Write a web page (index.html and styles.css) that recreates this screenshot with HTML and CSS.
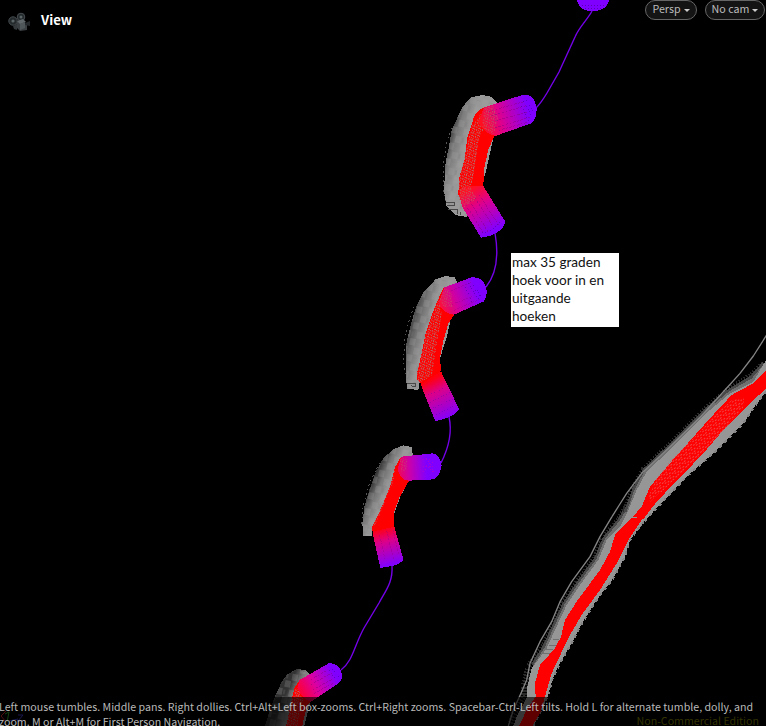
FILE: index.html
```html
<!DOCTYPE html>
<html lang="en">
<head>
<meta charset="utf-8">
<title>View</title>
<link rel="stylesheet" href="styles.css">
</head>
<body>
<main class="viewport">
<svg class="scene" viewBox="0 0 766 726" aria-hidden="true">
  <defs>
    <pattern id="mesh" width="18" height="21" patternUnits="userSpaceOnUse" patternTransform="skewX(-9)">
      <path class="grain" d="M0 0h3v6h-3zM6 3h3v3h-3zM12 0h3v3h-3zM3 9h3v3h-3zM9 9h3v6h-3zM15 12h3v3h-3zM0 15h3v3h-3zM6 18h6v3h-6zM12 6h3v3h-3z"/>
    </pattern>
    <pattern id="mesh2" width="21" height="15" patternUnits="userSpaceOnUse" patternTransform="rotate(-45)">
      <path class="grain2" d="M0 0h6v3h-6zM9 3h6v2h-6zM15 9h5v3h-5zM3 9h6v2h-6z"/>
    </pattern>
    <pattern id="blocks" width="37" height="49" patternUnits="userSpaceOnUse" patternTransform="rotate(12)">
      <path class="block-light" d="M0 0h18v20h-18zM20 24h17v19h-17z"/>
      <path class="block-dark" d="M20 3h7v14h-7zM2 28h12v4h-12z"/>
    </pattern>
    <linearGradient id="shade1" gradientUnits="userSpaceOnUse" x1="48" y1="200" x2="100" y2="215"><stop offset="0" stop-color="#3a3a3a"/><stop offset=".4" stop-color="#7c7c7c"/><stop offset="1" stop-color="#989898"/></linearGradient>
    <linearGradient id="shade2" gradientUnits="userSpaceOnUse" x1="38" y1="220" x2="90" y2="235"><stop offset="0" stop-color="#444"/><stop offset=".5" stop-color="#777"/><stop offset="1" stop-color="#959595"/></linearGradient>
    <linearGradient id="shade3" gradientUnits="userSpaceOnUse" x1="60" y1="170" x2="105" y2="190"><stop offset="0" stop-color="#333"/><stop offset=".5" stop-color="#777"/><stop offset="1" stop-color="#959595"/></linearGradient>
    <linearGradient id="t1" gradientUnits="userSpaceOnUse" x1="155" y1="130" x2="295" y2="88"><stop offset="0" stop-color="#ff1020"/><stop offset=".4" stop-color="#dc0090"/><stop offset="1" stop-color="#8000ff"/></linearGradient>
    <linearGradient id="b1" gradientUnits="userSpaceOnUse" x1="120" y1="325" x2="195" y2="450"><stop offset="0" stop-color="#ff1020"/><stop offset=".4" stop-color="#dc0090"/><stop offset="1" stop-color="#8000ff"/></linearGradient>
    <linearGradient id="t2" gradientUnits="userSpaceOnUse" x1="135" y1="130" x2="245" y2="90"><stop offset="0" stop-color="#fa1040"/><stop offset=".4" stop-color="#d000a0"/><stop offset="1" stop-color="#8000ff"/></linearGradient>
    <linearGradient id="b2" gradientUnits="userSpaceOnUse" x1="105" y1="360" x2="165" y2="475"><stop offset="0" stop-color="#ff0010"/><stop offset=".3" stop-color="#dc0088"/><stop offset="1" stop-color="#8000ff"/></linearGradient>
    <linearGradient id="t3" gradientUnits="userSpaceOnUse" x1="135" y1="115" x2="230" y2="110"><stop offset="0" stop-color="#fa0840"/><stop offset=".45" stop-color="#cc00a8"/><stop offset="1" stop-color="#8000ff"/></linearGradient>
    <linearGradient id="b3" gradientUnits="userSpaceOnUse" x1="95" y1="295" x2="125" y2="405"><stop offset="0" stop-color="#ff0010"/><stop offset=".35" stop-color="#dc0088"/><stop offset="1" stop-color="#8000ff"/></linearGradient>
    <linearGradient id="t4" gradientUnits="userSpaceOnUse" x1="115" y1="125" x2="220" y2="65"><stop offset="0" stop-color="#ff0030"/><stop offset=".45" stop-color="#dc00a0"/><stop offset="1" stop-color="#8000ff"/></linearGradient>
  </defs>

  <g class="thread">
    <path d="M592 11C588 19 579 27 575 37L559 72L547 93Q541 103 536 108"/>
    <path d="M495 233C498 250 498 272 486 287"/>
    <path d="M449 417C452 430 450 445 441 463"/>
    <path d="M392 566C393 582 386 590 379 603L364 628C354 646 353 661 341 670"/>
  </g>
  <path class="violet" d="M577 0H609Q608 7 602 9Q592 14 583 9Q578 6 577 0Z"/>
  <path class="pits" d="M582 5h25M585 8h18"/>

  <g transform="translate(430 80) scale(.33333)">
    <path class="ghost" d="M65 145L49 190L42 240L40 325L48 370"/>
    <path fill="url(#shade1)" d="M202 68L183 50L155 45L122 53L98 80L78 122L65 150L57 200L47 245L42 330L49 378L75 405L110 411V375L155 310L166 283L192 165Z"/>
    <path fill="url(#blocks)" d="M202 68L155 45L122 53L98 80L65 150L57 200L47 245L42 330L49 378L75 405L110 411V375L192 165Z"/>
    <path class="mark" d="M48 367h27v9h-24M54 389h29v12M91 397v9"/>
    <path class="red" d="M162 82Q132 93 125 135L112 172L104 238L87 295L85 345L100 375L160 320L162 268L176 205L195 166Z"/>
    <path fill="url(#mesh)" d="M160 90L125 140L108 210L86 310V350L125 310L134 270L147 175L160 150Z"/>
    <path fill="url(#t1)" d="M162 82L280 44Q310 40 319 78Q323 116 304 130L196 168Q160 160 145 125Z"/>
    <path class="rib" d="M175 94L282 65M183 108L288 77M185 126L292 96M195 143L300 112M206 151L292 127"/>
    <path fill="url(#mesh)" opacity=".65" d="M162 84L190 75L205 115L190 163L155 140Z"/>
    <path class="specks" d="M280 63L305 108M290 60L312 98M275 79L297 125"/>
    <path fill="url(#b1)" d="M88 348Q92 315 118 317L160 318L224 422Q226 438 212 449Q188 470 153 473L98 383Z"/>
    <path fill="url(#mesh)" opacity=".7" d="M87 325L120 318L140 355L105 382L88 358Z"/>
    <path class="rib" d="M119 362L174 456M135 354L191 442M148 345L205 434M108 374L160 459"/>
    <path class="specks" d="M155 458Q184 458 212 423"/>
  </g>

  <g transform="translate(395 260) scale(.33333)">
    <path class="ghost" d="M56 140L38 195L28 240L26 310L36 365"/>
    <path fill="url(#shade2)" d="M187 68L180 52L152 48L123 57L86 95L64 138L47 195L34 250L32 340L36 386L70 390L75 360L137 289L155 232L170 165Z"/>
    <path fill="url(#blocks)" d="M187 68L152 48L123 57L86 95L64 138L47 195L34 250L36 386L70 390L75 360L137 289Z"/>
    <path class="mark" d="M37 372h25v7h-12v-3"/>
    <path class="red" d="M145 84L131 115L112 160L92 220L80 280L66 340V360L80 374L137 334L136 287L145 242L160 190L177 165Z"/>
    <path fill="url(#mesh)" d="M132 112L94 220L66 342L72 370L112 345L125 252L141 160Z"/>
    <path fill="url(#t2)" d="M148 82L230 52Q262 50 272 78Q280 101 267 124L177 164Q145 160 130 130Z"/>
    <path fill="url(#mesh)" opacity=".5" d="M147 84L169 95L173 140L148 141L134 120Z"/>
    <path class="specks" d="M219 70L250 116M230 68L258 108M211 82L231 127M237 83L259 116"/>
    <path class="rib faint" d="M168 92L232 66M170 133L234 109M177 151L254 118"/>
    <path fill="url(#b2)" d="M77 373L138 334L193 449Q181 463 157 474L121 484Z"/>
    <path class="specks faint" d="M105 428l70-36M113 445l70-32M124 465l55-28M100 405l48-21"/>
  </g>

  <g transform="translate(350 430) scale(.33333)">
    <path class="ghost" d="M90 98L59 158L40 225L34 287"/>
    <path fill="url(#shade3)" d="M188 73L186 51L160 46L129 58L99 86L78 124L58 180L43 230L37 282L40 318H65L66 303L133 250L150 202L177 152Z"/>
    <path fill="url(#blocks)" d="M188 73L160 46L129 58L99 86L78 124L43 230L37 282L40 318H65L133 250Z"/>
    <path class="red" d="M152 82L135 112L120 170L98 225L66 292L68 306L132 294V246L148 203L177 152Z"/>
    <path fill="url(#mesh)" opacity=".75" d="M136 112L119 170L92 237L67 290L80 280L105 215L130 155Z"/>
    <path fill="url(#t3)" d="M154 80L249 70Q268 75 275 105Q270 138 252 148L177 152Q148 150 143 116Z"/>
    <path fill="url(#mesh)" opacity=".45" d="M151 83L171 88L170 120L153 126Z"/>
    <path class="specks hot" d="M220 88h25M222 98l28 30M221 125l30-30M230 84l22 45M218 110h36"/>
    <path fill="url(#b3)" d="M67 305L133 290L160 388Q158 398 128 408L91 414Z"/>
    <path class="rib faint" d="M89 316l17 76M110 303l22 90M129 300l18 77"/>
  </g>

  <g transform="translate(260 650) scale(.33333)">
    <path fill="url(#shade3)" d="M150 72L137 60L110 57L82 73L65 96L44 142L28 185L14 230H132L150 160Z"/>
    <path fill="url(#blocks)" d="M150 72L110 57L82 73L65 96L44 142L14 230H82L150 160Z"/>
    <path class="red" d="M119 89L104 113L95 150L78 230H126L142 165L151 157Z"/>
    <path fill="url(#mesh)" d="M108 108L96 150L79 228H112L130 146Z"/>
    <path fill="url(#t4)" d="M119 90L208 39Q234 40 244 65Q250 87 238 98L151 156Q119 140 112 112Z"/>
    <path class="rib" d="M153 88L201 61M152 104L215 69M158 120L219 86M163 130L219 100"/>
    <path class="specks" d="M202 53L228 89M211 50L235 80"/>
  </g>

  <g class="falloff" transform="translate(500 520) scale(.33333)">
    <path class="f1" d="M392 -40L365 5L320 60L295 120L240 195L200 255L165 330L140 385L95 445L82 500V530L50 590L40 618"/>
    <path class="f2" d="M392 -40L365 5L320 60L295 120L240 195L200 255L165 330L140 385L105 440"/>
    <path class="f3" d="M392 -40L365 5L320 60L295 120L240 195L200 255L165 330L140 385L105 440"/>
  </g>
  <g transform="translate(620 330) scale(.33333)">
    <g class="falloff">
      <path class="f1" d="M438 110L400 145L330 190L270 240L170 340L80 425L50 480L25 550"/>
      <path class="f2" d="M438 105L400 148L330 190L270 240L170 340L80 425L50 480L25 550"/>
      <path class="f3" d="M438 105L400 150L330 190L270 240L170 340L80 425L50 480L25 550"/>
    </g>
    <path class="outline" d="M440 15L400 78L360 130L315 180L240 262L150 350L65 430L20 490L-4 528L-24 560"/>
    <path class="lightgray" d="M438 90L400 155L330 190L270 240L170 340L80 425L50 480L25 540L0 590L45 605L100 545L200 440L280 370L370 280L400 235L438 185Z"/>
    <path class="edge" d="M438 185L400 235L370 280L280 370L200 440L100 545L50 600"/>
    <path class="red" d="M438 122L400 160L335 195L270 265L150 400L90 470L65 530L0 605H42L110 515L250 370L310 300L375 235L438 175Z"/>
    <path fill="url(#mesh2)" d="M335 209L280 262L211 335L152 392L110 444L85 500L90 519L122 487L187 427L252 365L309 302L369 236L372 205Z"/>
  </g>
  <g transform="translate(500 520) scale(.33333)">
    <path class="outline" d="M336 -10L300 50L270 110L215 185L180 245L155 305L120 365L90 430L80 480L65 515L40 570L25 618"/>
    <path class="lightgray" d="M385 -15L365 15L320 60L295 120L240 195L200 255L165 330L140 385L95 445L82 500V530L50 590L40 618H100L125 570L145 525L158 475L185 420L215 370L240 320L290 240L340 175L375 110L390 60L435 0Z"/>
    <path class="dashes" d="M132 390h28M127 400h24M147 378h26M160 358h18"/>
    <path class="edge" d="M100 618L125 570L145 525L158 475L185 420L215 370L240 320L290 240L340 175L375 110L390 60L435 0"/>
    <path class="red" d="M395 -5L345 45L330 95L300 150L230 245L195 300L183 350L165 385L120 435L105 490L107 530L80 570L57 618H97L120 580L135 530L155 460L195 375L210 345L245 285L300 210L350 130L385 60L428 -5Z"/>
  </g>
</svg>

<header class="toolbar">
  <div class="title">
    <svg class="camera" viewBox="0 0 23 20" aria-hidden="true">
      <path d="M9 9L19 12V18L12 19L8 15Z" fill="#3a3f42"/>
      <circle cx="5" cy="9" r="4.2" fill="#24292b" stroke="#454c4f"/>
      <circle cx="13" cy="5" r="3.8" fill="#24292b" stroke="#454c4f"/>
      <circle cx="5" cy="9" r="1.6" fill="#5b6467"/><circle cx="13" cy="5" r="1.5" fill="#5b6467"/>
      <path d="M9 9L15 7L18 10L12 12Z" fill="#60686c"/><path d="M12 12L17 10V16L12 18Z" fill="#50575b"/>
      <path d="M17 11L22 9V14L17 13Z" fill="#24282b"/><path d="M5 14L9 12V18L6 17Z" fill="#34393b"/>
    </svg>
    <span class="title-text">View</span>
  </div>
  <nav class="menus">
    <button class="pill persp"><span>Persp</span><i class="caret"></i></button>
    <button class="pill cam"><span>No cam</span><i class="caret"></i></button>
  </nav>
</header>

<aside class="note">max 35 graden<br>hoek voor in en<br>uitgaande<br>hoeken</aside>

<footer class="status">
  <svg class="axis" viewBox="0 0 28 20" aria-hidden="true"><path d="M6 2L1 7L6 13" stroke="#501010"/><path d="M5 5L9 3L7 13" stroke="#104010"/><path d="M9 12L18 10M18 6H23L18 12H23" stroke="#171750"/></svg>
  <p class="help"><span class="line">Left mouse tumbles. Middle pans. Right dollies. Ctrl+Alt+Left box-zooms. Ctrl+Right zooms. Spacebar-Ctrl-Left tilts. Hold L for alternate tumble, dolly, and</span><span class="line">zoom. M or Alt+M for First Person Navigation.</span></p>
  <span class="edition">Non-Commercial Edition</span>
</footer>
</main>
</body>
</html>
```
FILE: styles.css
```css
* { box-sizing: border-box; }
body { margin: 0; background: #000; }
.viewport {
  position: relative;
  display: flex;
  flex-direction: column;
  width: 766px;
  height: 726px;
  overflow: hidden;
  background: #000;
  font-family: "Noto Sans CJK SC", "Noto Sans", sans-serif;
}
.scene { position: absolute; inset: 0; width: 766px; height: 726px; shape-rendering: crispEdges; }
.thread { fill: none; stroke: #7300e8; stroke-width: 1.4; shape-rendering: auto; }
.violet { fill: #8000ff; }
.red { fill: #f00; }
.lightgray { fill: #969696; }
.grain { fill: #b86a68; }
.grain2 { fill: #ef4545; }
.block-light { fill: #a3a3a3; opacity: .25; }
.block-dark { fill: #777; opacity: .25; }
.ghost { fill: none; stroke: #555; stroke-width: 3; stroke-dasharray: 3 11 6 9; }
.mark { fill: none; stroke: #484848; stroke-width: 3; }
.rib { fill: none; stroke: #8a0080; stroke-width: 2.5; stroke-dasharray: 5 5 9 4; opacity: .6; }
.specks { fill: none; stroke: #4c00a8; stroke-width: 2.5; stroke-dasharray: 3 6; opacity: .75; }
.pits { fill: none; stroke: #5c00b8; stroke-width: 1; stroke-dasharray: 1 2; }
.hot { stroke: #c000c0; }
.faint { opacity: .4; }
.outline { fill: none; stroke: #858585; stroke-width: 4; stroke-linejoin: round; shape-rendering: auto; }
.falloff { fill: none; }
.f1 { stroke: #2a2a2a; stroke-width: 40; stroke-dasharray: 4 5; }
.f2 { stroke: #484848; stroke-width: 27; }
.f3 { stroke: #707070; stroke-width: 13; }
.dashes { fill: none; stroke: #707070; stroke-width: 3; }
.edge { fill: none; stroke: #858585; stroke-width: 6; stroke-dasharray: 9 12; }

.toolbar { position: relative; display: flex; justify-content: space-between; height: 40px; }
.title { display: flex; align-items: center; gap: 10px; padding-left: 8px; }
.camera { width: 23px; height: 20px; margin-top: 3px; }
.title-text { color: #fff; font-size: 13.2px; font-weight: 700; line-height: 20px; }
.menus { display: flex; align-items: flex-start; gap: 8px; padding-right: 1px; }
.pill {
  display: flex;
  align-items: center;
  justify-content: center;
  gap: 3px;
  height: 20px;
  margin: 0;
  padding: 0;
  border: 1px solid #666;
  border-radius: 10px;
  background: #141414;
  color: #bcbcbc;
  font: 10.7px/18px "Noto Sans CJK SC", sans-serif;
}
.pill span { margin-top: -3px; }
.persp { width: 52px; }
.cam { width: 60px; }
.caret { border: 3px solid transparent; border-top-color: #ccc; border-bottom: 0; }

.note {
  position: absolute;
  left: 511px;
  top: 253px;
  width: 108px;
  height: 74px;
  padding: 0 1px;
  background: #fff;
  color: #111;
  font: 13.6px/18px Lato, sans-serif;
  white-space: nowrap;
}

.status {
  position: relative;
  height: 29px;
  margin-top: auto;
  background: rgba(0, 0, 0, .63);
  overflow: hidden;
}
.axis { position: absolute; left: 0; top: 12px; width: 28px; height: 20px; fill: none; }
.help { position: relative; margin: 2px 0 0 -1px; color: #b9b9b9; font-size: 10.65px; line-height: 15px; }
.line { display: block; white-space: nowrap; }
.edition { position: absolute; right: 7px; top: 16px; color: #343400; font-size: 10.65px; line-height: 15px; }
```
